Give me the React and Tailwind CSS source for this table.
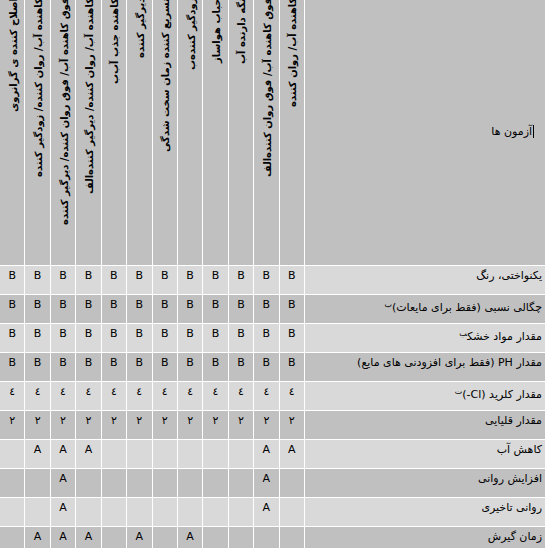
const headers = [
    "کاهنده آب/ روان کننده",
    "فوق کاهنده آب/ فوق روان کننده‌الف",
    "نگه دارنده آب",
    "حباب هواساز",
    "زودگیر کننده‌ب",
    "تسریع کننده زمان سخت شدگی",
    "دیرگیر کننده",
    "کاهنده جذب آب‌ب",
    "کاهنده آب/ روان کننده/ دیرگیر کننده‌الف",
    "فوق کاهنده آب/ فوق روان کننده/ دیرگیر کننده",
    "کاهنده آب/ روان کننده/ زودگیر کننده",
    "اصلاح کننده ی گرانروی",
];

const all = (v) => Array(12).fill(v);
const marks = (idx) => Array.from({ length: 12 }, (_, i) => (idx.includes(i) ? "A" : ""));

const rows = [
    { label: "یکنواختی، رنگ", cells: all("B") },
    { label: "چگالی نسبی (فقط برای مایعات)", note: "ب", cells: all("B") },
    { label: "مقدار مواد خشک", note: "ب", cells: all("B") },
    { label: <>مقدار <bdi dir="ltr">PH</bdi> (فقط برای افزودنی های مایع)</>, cells: all("B") },
    { label: <>مقدار کلرید <bdi dir="ltr">(-Cl)</bdi></>, note: "ت", cells: all("٤") },
    { label: "مقدار قلیایی", cells: all("۲") },
    { label: "کاهش آب", cells: marks([0, 1, 8, 9, 10]) },
    { label: "افزایش روانی", cells: marks([1, 9]) },
    { label: "روانی تاخیری", cells: marks([1, 9]) },
    { label: "زمان گیرش", cells: marks([4, 6, 8, 9, 10]) },
];

export default function App() {
    return (
        <div className="w-[545px] h-[548px] overflow-hidden bg-white font-['DejaVu_Sans',sans-serif] text-black">
            <div dir="rtl" className="-mt-[3px] grid grid-cols-[240px_repeat(12,minmax(0,1fr))] gap-px">
                {/* header */}
                <div className="h-[268px] bg-[#c0c0c0] flex items-center pr-[11px] text-[11px]">
                    <span className="border-r border-black pr-px leading-[13px]">آزمون ها</span>
                </div>
                {headers.map((h) => (
                    <div key={h} className="h-[268px] bg-[#c0c0c0] flex justify-center pl-[3px]">
                        <div className="[writing-mode:vertical-rl] rotate-180 text-[10px] font-bold leading-[12px] whitespace-nowrap text-right pb-[1px]">
                            {h}
                        </div>
                    </div>
                ))}

                {/* body */}
                {rows.map((r, i) => {
                    const bg = i % 2 === 0 ? "bg-[#d9d9d9]" : "bg-[#c0c0c0]";
                    return [
                        <div key={`l${i}`} className={`h-[28px] ${bg} pr-[3px] pt-[3px] text-[11px] leading-[14px] whitespace-nowrap`}>
                            {r.label}
                            {r.note && <span className="text-[8px] align-[4px]">{r.note}</span>}
                        </div>,
                        ...r.cells.map((c, j) => (
                            <div key={`c${i}-${j}`} className={`h-[28px] ${bg} text-center pt-[3px] text-[11px] leading-[14px]`}>
                                {c}
                            </div>
                        )),
                    ];
                })}
            </div>
        </div>
    );
}
